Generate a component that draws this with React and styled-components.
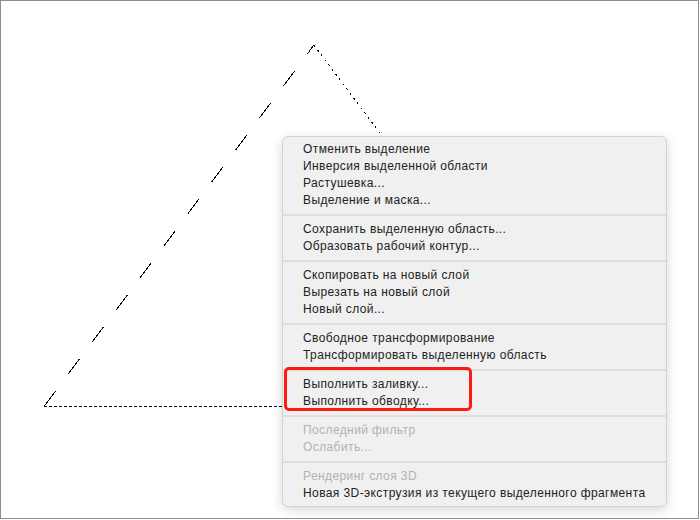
import React from 'react';
import styled, { createGlobalStyle } from 'styled-components';

const GlobalStyle = createGlobalStyle`
  html, body {
    margin: 0;
    padding: 0;
    background: #ffffff;
  }
  body {
    font-family: "Liberation Sans", Arial, sans-serif;
  }
`;

const Canvas = styled.div`
  position: relative;
  width: 699px;
  height: 519px;
  box-sizing: border-box;
  border: 1px solid #8e8e8e;
  background: #ffffff;
  overflow: hidden;
`;

const Drawing = styled.svg`
  display: block;
  position: absolute;
  left: -1px;
  top: -1px;
`;

const Menu = styled.div`
  position: absolute;
  left: 281px;
  top: 135px;
  width: 385px;
  box-sizing: border-box;
  display: flex;
  flex-direction: column;
  padding: 4px 0;
  background: #f0f0f0;
  border: 1px solid #d2d2d2;
  border-radius: 6px;
  box-shadow: 0 3px 12px rgba(0, 0, 0, 0.16);
`;

const Section = styled.div`
  display: flex;
  flex-direction: column;
`;

const Item = styled.div`
  height: 17px;
  line-height: 17px;
  padding-left: 20px;
  font-size: 12px;
  letter-spacing: 0.4px;
  white-space: nowrap;
  color: ${props => (props.disabled ? '#b2b2b2' : '#222222')};
`;

const Separator = styled.div`
  height: 2px;
  margin: 5px 0;
  background: #dedede;
`;

const Highlight = styled.div`
  position: absolute;
  left: 1px;
  top: 230px;
  width: 188px;
  height: 44px;
  box-sizing: border-box;
  border: 3px solid #ff1a0f;
  border-radius: 5px;
  pointer-events: none;
`;

const sections = [
  [['Отменить выделение'], ['Инверсия выделенной области'], ['Растушевка...'], ['Выделение и маска...']],
  [['Сохранить выделенную область...'], ['Образовать рабочий контур...']],
  [['Скопировать на новый слой'], ['Вырезать на новый слой'], ['Новый слой...']],
  [['Свободное трансформирование'], ['Трансформировать выделенную область']],
  [['Выполнить заливку...'], ['Выполнить обводку...']],
  [['Последний фильтр', true], ['Ослабить...', true]],
  [['Рендеринг слоя 3D', true], ['Новая 3D-экструзия из текущего выделенного фрагмента']],
];

const Selection = () => (
  <Drawing width="700" height="520" viewBox="0 0 700 520" shapeRendering="crispEdges">
    {/* left edge, long dashes */}
    <line x1="44" y1="406.5" x2="314" y2="45" stroke="#000" strokeWidth="1" strokeDasharray="19 21" />
    {/* right edge, dotted */}
    <line x1="314" y1="45" x2="585" y2="406.5" stroke="#000" strokeWidth="1" strokeDasharray="2 4" />
    {/* bottom edge */}
    <line x1="44" y1="406.5" x2="585" y2="406.5" stroke="#000" strokeWidth="1" strokeDasharray="3 2" />
  </Drawing>
);

const App = () => (
  <>
    <GlobalStyle />
    <Canvas>
      <Selection />
      <Menu>
        {sections.map((items, i) => (
          <React.Fragment key={i}>
            {i > 0 && <Separator />}
            <Section>
              {items.map(([label, disabled]) => (
                <Item key={label} disabled={disabled}>{label}</Item>
              ))}
            </Section>
          </React.Fragment>
        ))}
        <Highlight />
      </Menu>
    </Canvas>
  </>
);

export default App;
